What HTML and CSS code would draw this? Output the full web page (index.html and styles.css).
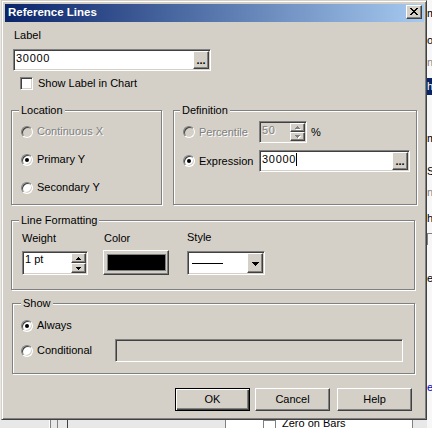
FILE: index.html
```html
<!DOCTYPE html>
<html lang="en">
<head>
<meta charset="utf-8">
<title>Reference Lines</title>
<link rel="stylesheet" href="styles.css">
</head>
<body>
<div class="desk">
  <div class="desk-main"></div>
  <div class="desk-side">
    <span class="frag f1">m</span>
    <span class="frag f2">o</span>
    <span class="frag f3">n</span>
    <span class="frag f4">h</span>
    <span class="frag f5">m</span>
    <span class="frag f6">S</span>
    <span class="frag f7">n</span>
    <span class="frag f8">h</span>
    <span class="frag f9"></span>
    <span class="frag f10">e</span>
    <span class="frag f11">e</span>
  </div>
  <div class="desk-bottom">
    <span class="bs bs-a"></span>
    <span class="bl bl-w"></span>
    <span class="bl bl-g"></span>
    <span class="bs bs-b"></span>
    <span class="bl bl-g"></span>
    <span class="bs bs-c"></span>
    <span class="bl bl-d"></span>
    <span class="bs bs-d"></span>
    <span class="bl bl-g"></span>
    <span class="bpanel"><span class="bcheck"></span><span class="btext">Zero on Bars</span></span>
    <span class="bl bl-g"></span>
  </div>
</div>

<div class="dialog">
  <div class="titlebar">
    <span class="title">Reference Lines</span>
    <span class="close raised">
      <svg width="8" height="7" viewBox="0 0 8 7" shape-rendering="crispEdges"><path fill="#000" d="M0 0h2v1h-2z M6 0h2v1h-2z M1 1h2v1h-2z M5 1h2v1h-2z M2 2h4v1h-4z M3 3h2v1h-2z M2 4h4v1h-4z M1 5h2v1h-2z M5 5h2v1h-2z M0 6h2v1h-2z M6 6h2v1h-2z"/></svg>
    </span>
  </div>
  <div class="client">
    <div class="lbl lbl-label">Label</div>
    <div class="field sunken field-label">
      <span class="ftext num">30000</span>
      <span class="dots raised">...</span>
    </div>
    <div class="check-row">
      <span class="check sunken"></span>
      <span class="ctext">Show Label in Chart</span>
    </div>

    <div class="groups">
      <div class="group g-location">
        <div class="legend">Location</div>
        <div class="radio r-first disabled"><span class="dot"></span><span class="rtext">Continuous X</span></div>
        <div class="radio r-next on"><span class="dot"></span><span class="rtext">Primary Y</span></div>
        <div class="radio r-next"><span class="dot"></span><span class="rtext">Secondary Y</span></div>
      </div>
      <div class="group g-def">
        <div class="legend">Definition</div>
        <div class="def-row def-row-1">
          <div class="radio disabled def-radio"><span class="dot"></span><span class="rtext">Percentile</span></div>
          <div class="spin sunken spin-pct">
            <span class="ftext num dis-text">50</span>
            <span class="sbtns">
              <span class="sbtn raised"><svg width="6" height="4" viewBox="0 0 6 4" shape-rendering="crispEdges"><path fill="#fff" d="M3 1h1v1h-1z M2 2h3v1h-3z M1 3h5v1h-5z"/><path fill="#808080" d="M2 0h1v1h-1z M1 1h3v1h-3z M0 2h5v1h-5z"/></svg></span>
              <span class="sbtn raised"><svg width="6" height="4" viewBox="0 0 6 4" shape-rendering="crispEdges"><path fill="#fff" d="M1 1h5v1h-5z M2 2h3v1h-3z M3 3h1v1h-1z"/><path fill="#808080" d="M0 0h5v1h-5z M1 1h3v1h-3z M2 2h1v1h-1z"/></svg></span>
            </span>
          </div>
          <span class="pct">%</span>
        </div>
        <div class="def-row def-row-2">
          <div class="radio on def-radio"><span class="dot"></span><span class="rtext">Expression</span></div>
          <div class="field sunken field-expr">
            <span class="ftext num">30000</span><span class="caret"></span>
            <span class="dots raised">...</span>
          </div>
        </div>
      </div>
    </div>

    <div class="group g-line">
      <div class="legend">Line Formatting</div>
      <div class="cols">
        <div class="col col-weight">
          <div class="flabel">Weight</div>
          <div class="spin sunken spin-weight">
            <span class="ftext wtext">1 pt</span>
            <span class="sbtns">
              <span class="sbtn raised"><svg width="5" height="3" viewBox="0 0 5 3" shape-rendering="crispEdges"><path fill="#000" d="M2 0h1v1h-1z M1 1h3v1h-3z M0 2h5v1h-5z"/></svg></span>
              <span class="sbtn raised"><svg width="5" height="3" viewBox="0 0 5 3" shape-rendering="crispEdges"><path fill="#000" d="M0 0h5v1h-5z M1 1h3v1h-3z M2 2h1v1h-1z"/></svg></span>
            </span>
          </div>
        </div>
        <div class="col col-color">
          <div class="flabel">Color</div>
          <div class="colorbtn raised"><span class="swatch"></span></div>
        </div>
        <div class="col col-style">
          <div class="flabel">Style</div>
          <div class="combo sunken">
            <span class="line-sample"></span>
            <span class="drop raised"><svg width="7" height="4" viewBox="0 0 7 4" shape-rendering="crispEdges"><path fill="#000" d="M0 0h7v1h-7z M1 1h5v1h-5z M2 2h3v1h-3z M3 3h1v1h-1z"/></svg></span>
          </div>
        </div>
      </div>
    </div>

    <div class="group g-show">
      <div class="legend">Show</div>
      <div class="radio on show-always"><span class="dot"></span><span class="rtext">Always</span></div>
      <div class="show-cond">
        <div class="radio cond-radio"><span class="dot"></span><span class="rtext">Conditional</span></div>
        <div class="field sunken field-cond"></div>
      </div>
    </div>

    <div class="buttons">
      <div class="btn btn-default">OK</div>
      <div class="btn raised btn-cancel">Cancel</div>
      <div class="btn raised btn-help">Help</div>
    </div>
  </div>
</div>
</body>
</html>
```
FILE: styles.css
```css
* { box-sizing: border-box; }
html, body { margin: 0; padding: 0; }
body {
  width: 432px;
  height: 428px;
  overflow: hidden;
  position: relative;
  background: #e8e8e8;
  font-family: "Liberation Sans", Arial, sans-serif;
  font-size: 11px;
  line-height: 13px;
  color: #000;
}

/* ---------- background window ---------- */
.desk {
  display: grid;
  grid-template-columns: 427px 5px;
  grid-template-rows: 420px 8px;
  width: 432px;
  height: 428px;
}
.desk-main { grid-column: 1; grid-row: 1; }
.desk-side {
  grid-column: 2;
  grid-row: 1 / span 2;
  background: #f7f7f7;
  display: flex;
  flex-direction: column;
  overflow: hidden;
  white-space: nowrap;
}
.frag { display: block; height: 13px; flex: none; }
.f1 { margin-top: 7px; }
.f2 { margin-top: 14px; }
.f3 { margin-top: 9px; color: #808080; }
.f4 { margin-top: 9px; height: 17px; line-height: 17px; background: #0a246a; color: #fff; }
.f5 { margin-top: 37px; }
.f6 { margin-top: 20px; }
.f7 { margin-top: 8px; color: #808080; }
.f8 { margin-top: 13px; }
.f9 { margin-top: 8px; height: 12px; border-top: 1px solid #808080; border-left: 1px solid #808080; }
.f10 { margin-top: 27px; }
.f11 { margin-top: 96px; color: #0000c8; }

.desk-bottom {
  grid-column: 1;
  grid-row: 2;
  display: flex;
  overflow: hidden;
}
.bs, .bl { flex: none; }
.bs-a { width: 49px; }
.bs-b { width: 6px; }
.bs-c { width: 9px; }
.bs-d { width: 157px; }
.bl { width: 1px; }
.bl-w { background: #fff; }
.bl-g { background: #808080; }
.bl-d { background: #404040; }
.bpanel {
  width: 186px;
  flex: none;
  background: #fff;
  display: flex;
  overflow: hidden;
  white-space: nowrap;
}
.bcheck {
  width: 13px;
  height: 13px;
  margin-left: 37px;
  flex: none;
  border: 1px solid #808080;
}
.btext { margin-left: 6px; margin-top: -3px; }

/* ---------- dialog window ---------- */
.dialog {
  position: absolute;
  left: 1px;
  top: 0;
  width: 426px;
  height: 420px;
  background: #d4d0c8;
  border: 1px solid;
  border-color: #d4d0c8 #404040 #404040 #d4d0c8;
  box-shadow: inset 1px 1px 0 #fff, inset -1px -1px 0 #808080;
  padding: 3px 2px 2px 3px;
  display: flex;
  flex-direction: column;
}

.raised {
  background: #d4d0c8;
  border: 1px solid;
  border-color: #fff #404040 #404040 #fff;
  box-shadow: inset -1px -1px 0 #808080;
}
.sunken {
  border: 1px solid;
  border-color: #808080 #fff #fff #808080;
  box-shadow: inset 1px 1px 0 #404040, inset -1px -1px 0 #d4d0c8;
}

.titlebar {
  height: 18px;
  flex: none;
  display: flex;
  align-items: flex-start;
  background: linear-gradient(to right, #0a246a, #a6caf0);
}
.title {
  color: #fff;
  font-weight: bold;
  font-size: 11.5px;
  line-height: 16px;
  padding-left: 3px;
  white-space: nowrap;
}
.close {
  margin: 1px 2px 0 auto;
  width: 16px;
  height: 14px;
  flex: none;
  display: flex;
}
.close svg { display: block; margin: 2px 0 0 3px; }

.client {
  display: flex;
  flex-direction: column;
  align-items: flex-start;
}

.lbl-label { margin: 7px 0 0 9px; }

/* text fields */
.field {
  display: flex;
  align-items: flex-start;
  padding: 1px;
  background: #fff;
  flex: none;
}
.ftext { padding: 1px 0 0 1px; white-space: nowrap; }
.num { letter-spacing: 0.7px; }
.dots {
  margin-left: auto;
  width: 16px;
  align-self: stretch;
  display: flex;
  justify-content: center;
  align-items: flex-end;
  font-weight: bold;
  padding-bottom: 1px;
  letter-spacing: 0;
  flex: none;
}
.field-label { margin: 7px 0 0 8px; width: 198px; height: 22px; }
.caret {
  width: 1px;
  height: 13px;
  margin: 1px 0 0 0;
  background: #000;
  flex: none;
}

/* checkbox */
.check-row {
  display: flex;
  align-items: center;
  height: 13px;
  margin: 6px 0 0 15px;
}
.check {
  width: 13px;
  height: 13px;
  background: #fff;
  flex: none;
}
.ctext { margin-left: 5px; white-space: nowrap; }

/* group boxes */
.groups {
  display: flex;
  margin: 20px 0 0 6px;
}
.group {
  border: 1px solid #808080;
  box-shadow: inset 1px 1px 0 #fff, 1px 1px 0 #fff;
  display: flex;
  flex-direction: column;
  align-items: flex-start;
  flex: none;
}
.legend {
  margin-top: -7px;
  background: #d4d0c8;
  padding: 0 2px;
  line-height: 13px;
  white-space: nowrap;
}
.g-location { width: 151px; height: 95px; }
.g-location .legend { margin-left: 7px; }
.g-def { width: 244px; height: 95px; margin-left: 11px; }
.g-def .legend { margin-left: 6px; }

/* radios */
.radio {
  display: flex;
  align-items: center;
  height: 13px;
  flex: none;
  white-space: nowrap;
}
.dot {
  width: 12px;
  height: 12px;
  border-radius: 50%;
  border: 1px solid;
  border-color: #808080 #fff #fff #808080;
  box-shadow: inset 1px 1px 0 #404040, inset -1px -1px 0 #d4d0c8;
  background: #fff;
  flex: none;
  margin-right: 4px;
  display: flex;
  align-items: center;
  justify-content: center;
}
.radio.disabled .dot { background: #d4d0c8; }
.radio.on .dot::after {
  content: "";
  width: 4px;
  height: 4px;
  border-radius: 50%;
  background: #000;
}
.radio.disabled .rtext, .dis-text {
  color: #808080;
  text-shadow: 1px 1px 0 #fff;
}

.g-location .radio { margin-left: 9px; }
.r-first { margin-top: 8px; }
.r-next { margin-top: 15px; }

/* definition rows */
.def-row {
  display: flex;
  align-items: center;
  height: 22px;
  margin-left: 9px;
}
.def-row-1 { margin-top: 4px; }
.def-row-2 { margin-top: 7px; }
.def-radio { width: 76px; }
.pct { margin-left: 4px; }
.field-expr { width: 151px; height: 22px; }

/* spin boxes */
.spin {
  display: flex;
  align-items: flex-start;
  padding: 1px;
  flex: none;
}
.spin-pct { width: 48px; height: 22px; background: #d4d0c8; }
.spin-weight { width: 66px; height: 24px; background: #fff; }
.wtext { padding: 0 0 0 1px; }
.sbtns {
  margin-left: auto;
  width: 15px;
  align-self: stretch;
  display: flex;
  flex-direction: column;
  flex: none;
}
.sbtn {
  flex: 1;
  display: flex;
  align-items: center;
  justify-content: center;
}
.sbtn svg { display: block; }

/* line formatting */
.g-line { width: 404px; height: 70px; margin: 15px 0 0 6px; }
.g-line .legend { margin-left: 7px; }
.cols {
  display: flex;
  align-items: flex-start;
  margin: 5px 0 0 10px;
}
.col { display: flex; flex-direction: column; align-items: flex-start; flex: none; }
.flabel { margin-bottom: 6px; }
.col-weight { width: 66px; }
.col-color { width: 66px; margin-left: 15px; }
.col-color .flabel { padding-left: 1px; }
.col-style { width: 78px; margin-left: 18px; }
.col-style .flabel { margin-top: -1px; margin-bottom: 7px; }

.colorbtn {
  width: 66px;
  height: 25px;
  margin-top: -1px;
  display: flex;
  padding: 3px 2px 3px 3px;
}
.swatch {
  flex: 1;
  background: #000;
  border: 1px solid #808080;
}

.combo {
  width: 78px;
  height: 24px;
  background: #fff;
  padding: 1px;
  display: flex;
  align-items: center;
}
.line-sample {
  width: 31px;
  height: 1px;
  margin-left: 3px;
  background: #000;
  flex: none;
}
.drop {
  margin-left: auto;
  width: 16px;
  align-self: stretch;
  display: flex;
  align-items: center;
  justify-content: center;
  flex: none;
}
.drop svg { display: block; margin-top: 1px; }

/* show */
.g-show { width: 403px; height: 71px; margin: 13px 0 0 7px; }
.g-show .legend { margin-left: 8px; }
.show-always { margin: 9px 0 0 8px; }
.show-cond {
  display: flex;
  align-items: center;
  height: 23px;
  margin: 7px 0 0 8px;
}
.cond-radio { width: 94px; }
.field-cond { width: 288px; height: 23px; background: #d4d0c8; }

/* buttons */
.buttons {
  display: flex;
  margin: 14px 0 0 170px;
}
.btn {
  width: 75px;
  height: 23px;
  display: flex;
  align-items: center;
  justify-content: center;
  flex: none;
}
.btn-default {
  background: #d4d0c8;
  border: 1px solid #000;
  box-shadow: inset 1px 1px 0 #fff, inset -1px -1px 0 #404040, inset -2px -2px 0 #808080;
}
.btn-cancel { margin-left: 5px; }
.btn-help { margin-left: 7px; }
```
